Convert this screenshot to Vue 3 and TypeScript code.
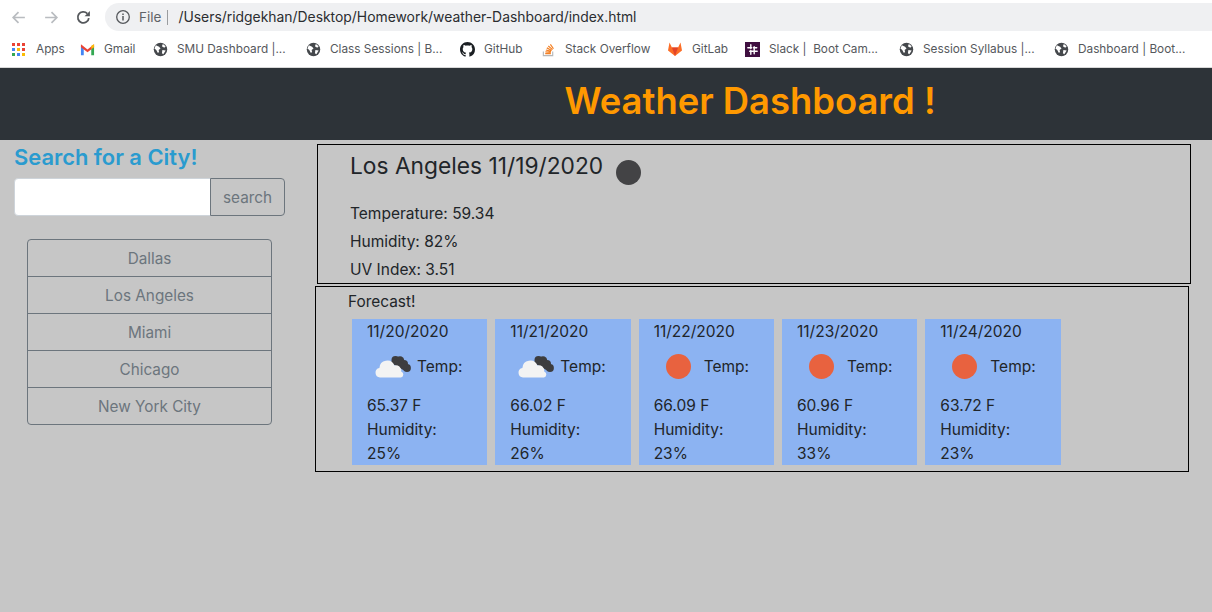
<script setup lang="ts">
interface Mark { label: string; kind: string; width: number }
const marks: Mark[] = [
  { label: 'Apps', kind: 'apps', width: 68 },
  { label: 'Gmail', kind: 'gmail', width: 73 },
  { label: 'SMU Dashboard |...', kind: 'globe', width: 153 },
  { label: 'Class Sessions | B...', kind: 'globe', width: 154 },
  { label: 'GitHub', kind: 'github', width: 81 },
  { label: 'Stack Overflow', kind: 'so', width: 126 },
  { label: 'GitLab', kind: 'gitlab', width: 78 },
  { label: 'Slack |  Boot Cam...', kind: 'slack', width: 154 },
  { label: 'Session Syllabus |...', kind: 'globe', width: 155 },
  { label: 'Dashboard | Boot...', kind: 'globe', width: 130 },
]
const cities = ['Dallas', 'Los Angeles', 'Miami', 'Chicago', 'New York City']
const forecast = [
  { date: '11/20/2020', temp: '65.37 F', hum: '25%', cloud: true },
  { date: '11/21/2020', temp: '66.02 F', hum: '26%', cloud: true },
  { date: '11/22/2020', temp: '66.09 F', hum: '23%', cloud: false },
  { date: '11/23/2020', temp: '60.96 F', hum: '33%', cloud: false },
  { date: '11/24/2020', temp: '63.72 F', hum: '23%', cloud: false },
]
const appColors = ['#ea4335', '#ea4335', '#ea4335', '#4285f4', '#fbbc05', '#ea4335', '#34a853', '#4285f4', '#fbbc05']
</script>

<template>
  <div class="page">
    <div class="toolbar">
      <svg class="nav-icon" viewBox="0 0 16 16"><path d="M14 8H3M8 3 3 8l5 5" fill="none" stroke="#b9bcc0" stroke-width="1.6" /></svg>
      <svg class="nav-icon second" viewBox="0 0 16 16"><path d="M2 8h11M8 3l5 5-5 5" fill="none" stroke="#b9bcc0" stroke-width="1.6" /></svg>
      <svg class="nav-icon third" viewBox="0 0 16 16"><path d="M13 8.500A5.200 5.200 0 1 1 11.600 4.300" fill="none" stroke="#55585c" stroke-width="1.700" /><path d="M14 1.800v5h-5z" fill="#55585c" /></svg>
      <div class="address">
        <svg class="info" viewBox="0 0 16 16"><circle cx="8" cy="8" r="6.300" fill="none" stroke="#55585c" stroke-width="1.300" /><path d="M8 7v4.400M8 4.400v1.500" stroke="#55585c" stroke-width="1.500" /></svg>
        <span class="file">File</span>
        <span class="divider"></span>
        <span class="url">/Users/ridgekhan/Desktop/Homework/weather-Dashboard/index.html</span>
      </div>
    </div>

    <div class="bookmarks">
      <div v-for="m in marks" :key="m.label" class="mark" :style="{ width: m.width + 'px' }">
        <span v-if="m.kind === 'apps'" class="apps-grid"><i v-for="(c, i) in appColors" :key="i" :style="{ background: c }"></i></span>
        <svg v-else-if="m.kind === 'gmail'" class="bm-icon" viewBox="0 0 16 14">
          <path d="M1 3v10h3V6z" fill="#4285f4" /><path d="M12 6v7h3V3z" fill="#34a853" />
          <path d="M1 1.500 8 7l7-5.500V4.500L8 10 1 4.500z" fill="#ea4335" /><path d="M12 3l3-1.500v3L12 6.500z" fill="#fbbc05" />
        </svg>
        <svg v-else-if="m.kind === 'globe'" class="bm-icon" viewBox="0 0 16 16">
          <circle cx="8" cy="8" r="7.200" fill="#45484c" />
          <path d="M3 3.500 6.500 5 8 7 6 8.500 6.500 11 5 11.500 3.500 8.500 1.500 7zM10.500 2l3 2.500-1.500 1.500L9.500 4.500zM10 8.500l3.500.5-2.500 4-1.500-1z" fill="#fff" />
        </svg>
        <svg v-else-if="m.kind === 'github'" class="bm-icon" viewBox="0 0 16 16">
          <path fill="#1b1f23" d="M8 0C3.580 0 0 3.580 0 8c0 3.540 2.290 6.530 5.470 7.590.4.070.55-.17.55-.38 0-.19-.01-.82-.01-1.490-2.010.37-2.530-.49-2.690-.94-.09-.23-.48-.94-.82-1.130-.28-.15-.68-.52-.01-.53.63-.01 1.080.58 1.230.82.72 1.210 1.870.87 2.330.66.070-.52.28-.87.51-1.070-1.780-.2-3.640-.89-3.640-3.950 0-.87.310-1.590.820-2.150-.08-.2-.36-1.020.08-2.120 0 0 .67-.21 2.200.82.640-.18 1.320-.27 2-.27s1.360.09 2 .27c1.530-1.040 2.200-.82 2.200-.82.44 1.100.16 1.920.08 2.120.51.560.82 1.270.82 2.150 0 3.070-1.870 3.750-3.650 3.950.29.250.54.730.54 1.480 0 1.070-.01 1.930-.01 2.200 0 .21.150.46.550.38A8.010 8.010 0 0 0 16 8c0-4.420-3.580-8-8-8z" />
        </svg>
        <svg v-else-if="m.kind === 'so'" class="bm-icon" viewBox="0 0 16 16">
          <path d="M2.500 10v4.500h10V10" fill="none" stroke="#b5b7b9" stroke-width="1.200" />
          <path d="M4.500 12.500h6M4.700 10.500l5.800.6M5.200 8.500l5.600 1.500M6.200 6.300l5.200 2.700M7.800 4.300l4.500 3.800M10 2.500l3.300 4.700" fill="none" stroke="#f48024" stroke-width="1.300" />
        </svg>
        <svg v-else-if="m.kind === 'gitlab'" class="bm-icon wide" viewBox="0 0 16 16">
          <path d="M8 15 1 9.500l1.500-8 2.400 5h6.200l2.400-5 1.500 8z" fill="#fc6d26" /><path d="M8 15 4.900 6.500h6.200z" fill="#e24329" />
        </svg>
        <svg v-else-if="m.kind === 'slack'" class="bm-icon" viewBox="0 0 16 16">
          <rect width="16" height="16" fill="#3f0f40" />
          <path d="M6.200 3v4M9.800 5v4M3 6.200h4M5 9.800h4M6.200 9v4M9.800 9v3.500M9 6.200h3.500M9 9.800h4" stroke="#fff" stroke-width="1.500" stroke-linecap="round" />
        </svg>
        <span class="bm-label">{{ m.label }}</span>
      </div>
    </div>

    <header class="hero"><h1>Weather Dashboard !</h1></header>

    <div class="content">
      <aside class="side">
        <h2>Search for a City!</h2>
        <div class="search">
          <input class="search-input" type="text" />
          <button class="search-btn" type="button">search</button>
        </div>
        <div class="cities">
          <button v-for="c in cities" :key="c" class="city" type="button">{{ c }}</button>
        </div>
      </aside>

      <main class="main">
        <section class="today">
          <div class="today-head">
            <h3>Los Angeles 11/19/2020</h3>
            <span class="moon"></span>
          </div>
          <p>Temperature: 59.34</p>
          <p>Humidity: 82%</p>
          <p>UV Index: 3.51</p>
        </section>

        <section class="outlook">
          <div class="outlook-title">Forecast!</div>
          <div class="cards">
            <article v-for="f in forecast" :key="f.date" class="card">
              <div class="line">{{ f.date }}</div>
              <div class="temp-row">
                <svg v-if="f.cloud" class="wx" viewBox="0 0 36 24">
                  <g fill="#3d3d3f">
                    <circle cx="20.500" cy="5" r="4" /><circle cx="25" cy="5.500" r="4.200" /><circle cx="29" cy="9" r="4" /><circle cx="32" cy="13" r="3.900" />
                    <path d="M18 3l15 8-3 5-14-8z" />
                  </g>
                  <path d="M5 22.500a4.800 4.800 0 0 1-.6-9.500 7.800 7.800 0 0 1 15-2.600 5.500 5.500 0 0 1 6.800 6 3.200 3.200 0 0 1-.2 6.100z" fill="#f3f3f3" />
                </svg>
                <span v-else class="sun"></span>
                <span class="temp-label">Temp:</span>
              </div>
              <div class="line">{{ f.temp }}</div>
              <div class="line">Humidity:</div>
              <div class="line">{{ f.hum }}</div>
            </article>
          </div>
        </section>
      </main>
    </div>
  </div>
</template>

<style>
html, body { margin: 0; background: #c6c6c6; }
</style>

<style scoped>
.page {
  width: 1212px;
  height: 612px;
  overflow: hidden;
  background: #c6c6c6;
  font-family: Inter, "Liberation Sans", sans-serif;
  color: #212529;
}
.toolbar {
  height: 36px;
  box-sizing: border-box;
  padding: 3px 0 5px 10px;
  background: #fff;
  display: flex;
  align-items: center;
}
.nav-icon { width: 17px; height: 17px; flex: none; }
.second { margin-left: 16px; }
.third { margin-left: 15px; }
.address {
  margin-left: 13px;
  flex: 1;
  height: 28px;
  border-radius: 14px 0 0 14px;
  background: #eff0f2;
  display: flex;
  align-items: center;
  padding-left: 10px;
}
.info { width: 16px; height: 16px; }
.file { margin-left: 8px; font-size: 13.500px; color: #5f6368; }
.divider { width: 1px; height: 15px; background: #9a9c9f; margin-left: 6px; }
.url { margin-left: 10px; font-size: 13.900px; color: #2b2d30; white-space: nowrap; }
.bookmarks {
  height: 32px;
  box-sizing: border-box;
  background: #fff;
  border-bottom: 1px solid #d8d8d8;
  display: flex;
  align-items: center;
  padding: 0 0 5px 12px;
}
.mark {
  display: flex;
  align-items: center;
  flex: none;
  white-space: pre;
  font-size: 11.800px;
  color: #55585c;
}
.bm-icon { width: 15px; height: 15px; flex: none; }
.bm-icon.wide { width: 16px; height: 16px; }
.bm-label { margin-left: 9px; }
.apps-grid {
  width: 13px;
  height: 13px;
  flex: none;
  display: grid;
  grid-template-columns: repeat(3, 3px);
  grid-auto-rows: 3px;
  gap: 2px;
  margin-right: 2px;
}
.apps-grid i { display: block; }
.hero {
  height: 72px;
  box-sizing: border-box;
  padding-bottom: 6px;
  background: #2d3338;
  display: flex;
  justify-content: center;
  align-items: center;
}
h1 {
  margin: 0 0 0 -12px;
  font-size: 36.400px;
  font-weight: 600;
  color: #ff9900;
  transform: translateX(150px);
  white-space: nowrap;
}
.content { display: flex; align-items: flex-start; }
.side { width: 315px; flex: none; box-sizing: border-box; padding: 1px 0 0 14px; }
h2 {
  margin: 0;
  font-size: 21.900px;
  line-height: 32px;
  font-weight: 600;
  color: #2a9bcf;
}
.search { display: flex; width: 271px; height: 38px; margin-top: 5px; }
.search-input {
  flex: 1;
  min-width: 0;
  box-sizing: border-box;
  border: 1px solid #ced4da;
  border-radius: 4px 0 0 4px;
  background: #fff;
}
.search-btn {
  width: 75px;
  box-sizing: border-box;
  border: 1px solid #6c757d;
  border-radius: 0 4px 4px 0;
  margin-left: -1px;
  background: transparent;
  color: #6c757d;
  font: 15.300px Inter, "Liberation Sans", sans-serif;
}
.cities {
  width: 245px;
  margin: 23px 0 0 13px;
  box-sizing: border-box;
  border: 1px solid #6c757d;
  border-radius: 4px;
  display: flex;
  flex-direction: column;
}
.city {
  height: 37px;
  border: 0;
  border-top: 1px solid #6c757d;
  background: transparent;
  color: #6c757d;
  font: 15.300px Inter, "Liberation Sans", sans-serif;
  padding: 0;
}
.city:first-child { border-top: 0; height: 36px; }
.main { width: 876px; flex: none; padding-top: 4px; }
.today {
  margin-left: 2px;
  width: 874px;
  height: 140px;
  box-sizing: border-box;
  border: 1px solid #000;
  padding: 7px 0 0 32px;
}
.today-head { display: flex; align-items: flex-start; height: 48px; }
h3 { margin: 0; font-size: 22.750px; line-height: 27px; font-weight: 400; }
.moon {
  width: 25px;
  height: 25px;
  border-radius: 50%;
  background: #434345;
  margin: 8px 0 0 13px;
}
.today p { margin: 0; font-size: 15.500px; line-height: 28px; height: 28px; }
.outlook {
  margin-top: 2px;
  width: 874px;
  height: 186px;
  box-sizing: border-box;
  border: 1px solid #000;
}
.outlook-title { font-size: 15.400px; line-height: 24px; height: 32px; padding: 3px 0 0 32px; box-sizing: border-box; }
.cards { display: flex; gap: 8px; padding-left: 36px; }
.card {
  width: 135.330px;
  height: 146px;
  background: #8cb3f2;
  box-sizing: border-box;
  padding: 1px 0 0 15px;
}
.line { font-size: 15.500px; line-height: 24px; }
.temp-row { height: 50px; position: relative; display: flex; align-items: flex-start; }
.wx { width: 36px; height: 24px; margin: 11px 0 0 8px; flex: none; }
.sun {
  width: 25px;
  height: 25px;
  border-radius: 50%;
  background: #e8623f;
  margin: 10px 0 0 12px;
  flex: none;
}
.temp-label { position: absolute; left: 50px; top: 11px; font-size: 15.500px; line-height: 24px; }
</style>
